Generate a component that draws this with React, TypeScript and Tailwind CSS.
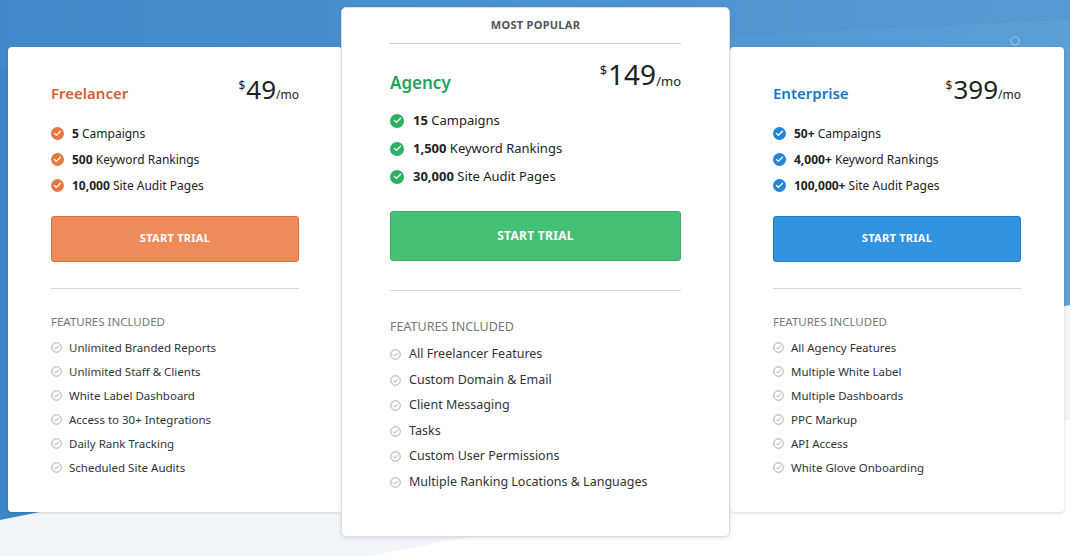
import { Check } from "lucide-react";

type Plan = {
  name: string;
  price: string;
  color: string;
  btn: string;
  top: [string, string][];
  features: string[];
};

const plans: Record<string, Plan> = {
  freelancer: {
    name: "Freelancer",
    price: "49",
    color: "text-[#d7602f]",
    btn: "bg-[#ef8a5a] border-[#dd6f3d]",
    top: [["5", "Campaigns"], ["500", "Keyword Rankings"], ["10,000", "Site Audit Pages"]],
    features: [
      "Unlimited Branded Reports",
      "Unlimited Staff & Clients",
      "White Label Dashboard",
      "Access to 30+ Integrations",
      "Daily Rank Tracking",
      "Scheduled Site Audits",
    ],
  },
  agency: {
    name: "Agency",
    price: "149",
    color: "text-[#1fa35a]",
    btn: "bg-[#44c174] border-[#35ad63]",
    top: [["15", "Campaigns"], ["1,500", "Keyword Rankings"], ["30,000", "Site Audit Pages"]],
    features: [
      "All Freelancer Features",
      "Custom Domain & Email",
      "Client Messaging",
      "Tasks",
      "Custom User Permissions",
      "Multiple Ranking Locations & Languages",
    ],
  },
  enterprise: {
    name: "Enterprise",
    price: "399",
    color: "text-[#1479c9]",
    btn: "bg-[#3293e0] border-[#1f7dc8]",
    top: [["50+", "Campaigns"], ["4,000+", "Keyword Rankings"], ["100,000+", "Site Audit Pages"]],
    features: [
      "All Agency Features",
      "Multiple White Label",
      "Multiple Dashboards",
      "PPC Markup",
      "API Access",
      "White Glove Onboarding",
    ],
  },
};

const dot: Record<string, string> = {
  freelancer: "bg-[#e8773f]",
  agency: "bg-[#2fb063]",
  enterprise: "bg-[#2484d6]",
};

function Badge({ kind, big }: { kind: string; big?: boolean }) {
  return (
    <span
      className={`${dot[kind]} ${big ? "w-[14px] h-[14px]" : "w-[13px] h-[13px]"} rounded-full flex items-center justify-center shrink-0`}
    >
      <Check className="w-[9px] h-[9px] text-white" strokeWidth={3.5} />
    </span>
  );
}

function OutlineCheck() {
  return (
    <svg viewBox="0 0 12 12" className="w-[11px] h-[11px] shrink-0">
      <circle cx="6" cy="6" r="5.2" fill="none" stroke="#9a9a9a" strokeWidth="0.9" />
      <path d="M3.6 6.1l1.6 1.6 3.2-3.3" fill="none" stroke="#9a9a9a" strokeWidth="0.9" />
    </svg>
  );
}

function Card({ kind }: { kind: string }) {
  const p = plans[kind];
  const mid = kind === "agency";
  return (
    <div
      className={
        mid
          ? "relative z-10 w-[389px] h-[530px] -ml-[1px] bg-white rounded-[5px] border border-[#d7dde3] shadow-[0_1px_4px_rgba(0,0,0,0.12)] px-[48px]"
          : "w-[334px] h-[465px] mt-[40px] bg-white rounded-[4px] shadow-[0_1px_3px_rgba(0,0,0,0.15)] px-[43px]"
      }
    >
      {mid && (
        <div className="h-[36px] border-b border-[#cfcfcf] flex items-center justify-center text-[11px] font-bold tracking-wide text-[#555]">
          MOST POPULAR
        </div>
      )}
      <div className={`flex justify-between items-start ${mid ? "pt-[16px]" : "pt-[29px]"}`}>
        <div className={`${p.color} ${mid ? "text-[17px] mt-[10px]" : "text-[15px] mt-[6px]"} font-semibold`}>{p.name}</div>
        <div className="flex items-start text-[#222]">
          <span className={`${mid ? "text-[13px]" : "text-[12px]"} mt-[1px] mr-[1px]`}>$</span>
          <span className={`${mid ? "text-[28px]" : "text-[26px]"} leading-none`}>{p.price}</span>
          <span className={`${mid ? "text-[13px] mt-[12px]" : "text-[12px] mt-[10px]"}`}>/mo</span>
        </div>
      </div>
      <div className={`flex flex-col ${mid ? "gap-[10px] mt-[16px] text-[13px]" : "gap-[8px] mt-[20px] text-[12px]"} text-[#222]`}>
        {p.top.map(([b, t]) => (
          <div key={t} className={`flex items-center ${mid ? "gap-[9px] h-[18px]" : "gap-[8px] h-[18px]"}`}>
            <Badge kind={kind} big={mid} />
            <span>
              <b className="font-bold">{b}</b> {t}
            </span>
          </div>
        ))}
      </div>
      <button
        className={`${p.btn} w-full border rounded-[3px] text-white font-bold tracking-wide ${mid ? "h-[50px] mt-[25px] text-[12px]" : "h-[46px] mt-[21px] text-[11px]"}`}
      >
        START TRIAL
      </button>
      <div className={`border-t border-[#d6d6d6] ${mid ? "mt-[29px]" : "mt-[26px]"}`} />
      <div className={`text-[#777] ${mid ? "text-[12.5px] mt-[27px]" : "text-[11.5px] mt-[24px]"}`}>FEATURES INCLUDED</div>
      <div className={`flex flex-col text-[#333] ${mid ? "mt-[10px] gap-[8.5px] text-[12.5px]" : "mt-[9px] gap-[7px] text-[11.5px]"}`}>
        {p.features.map((f) => (
          <div key={f} className={`flex items-center h-[17px] ${mid ? "gap-[8px]" : "gap-[7px]"}`}>
            <OutlineCheck />
            <span>{f}</span>
          </div>
        ))}
      </div>
    </div>
  );
}

export default function App() {
  return (
    <div className="relative w-[1070px] h-[556px] overflow-hidden bg-[#f1f5fa] font-['Lato','Liberation_Sans',sans-serif]">
      <svg className="absolute inset-0" width="1070" height="556" viewBox="0 0 1070 556">
        <defs>
          <linearGradient id="bg" x1="0" y1="0" x2="1" y2="0">
            <stop offset="0" stopColor="#3d86c6" />
            <stop offset="1" stopColor="#5c9fd7" />
          </linearGradient>
        </defs>
        <polygon points="0,0 1070,0 1070,305 0,520" fill="url(#bg)" />
        <polygon points="0,0 1070,0 1070,20 0,70" fill="#4a90cf" opacity="0.35" />
        <polygon points="240,556 1070,556 1070,420 370,556" fill="#ffffff" />
        <circle cx="1015" cy="41" r="4" fill="none" stroke="#9cc2e6" strokeWidth="1.2" />
      </svg>
      <div className="relative flex items-start pl-[8px] pt-[7px]">
        <Card kind="freelancer" />
        <Card kind="agency" />
        <Card kind="enterprise" />
      </div>
    </div>
  );
}
